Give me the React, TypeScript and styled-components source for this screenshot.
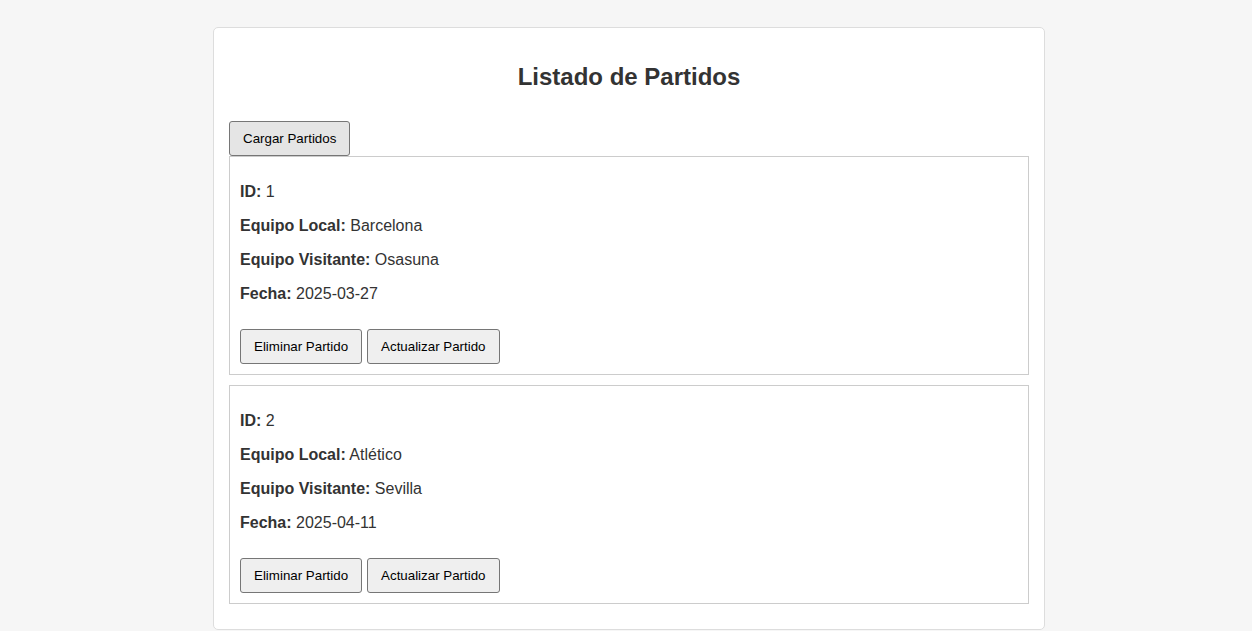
import React from 'react'
import styled, { createGlobalStyle } from 'styled-components'

const Global = createGlobalStyle`
  body {
    margin: 0;
    padding: 27px 0 0;
    background: #f6f6f6;
    font-family: 'Liberation Sans', Arial, sans-serif;
    color: #333;
  }
`

const Container = styled.div`
  box-sizing: border-box;
  width: 832px;
  margin-left: calc(50% - 413px);
  padding: 15px;
  background: #fff;
  border: 1px solid #ddd;
  border-radius: 5px;
`

const Title = styled.h2`
  margin: 20px 0;
  font-size: 24px;
  line-height: 28px;
  text-align: center;
  color: #333;
`

const Button = styled.button<{ $active?: boolean }>`
  box-sizing: border-box;
  height: 35px;
  padding: 0 13px;
  font-family: 'Liberation Sans', Arial, sans-serif;
  font-size: 13.33px;
  color: #000;
  background: ${(p) => (p.$active ? '#e5e5e5' : '#efefef')};
  border: 1px solid #767676;
  border-radius: 3px;
  cursor: pointer;
`

const LoadButton = styled(Button)`
  display: block;
  margin-top: 30px;
`

const Card = styled.div`
  padding: 10px;
  margin-bottom: 10px;
  border: 1px solid #ccc;
  background: #fff;
`

const Field = styled.p`
  margin: 16px 0;
  font-size: 16px;
  line-height: 18px;
`

const Actions = styled.div`
  display: flex;
  gap: 5px;
  margin-top: 26px;
`

const partidos = [
  { id: 1, local: 'Barcelona', visitante: 'Osasuna', fecha: '2025-03-27' },
  { id: 2, local: 'Atlético', visitante: 'Sevilla', fecha: '2025-04-11' },
]

const App = () => {
  return (
    <>
      <Global />
      <Container>
        <Title>Listado de Partidos</Title>
        <LoadButton $active>Cargar Partidos</LoadButton>
        {partidos.map((p) => (
          <Card key={p.id}>
            <Field>
              <strong>ID:</strong> {p.id}
            </Field>
            <Field>
              <strong>Equipo Local:</strong> {p.local}
            </Field>
            <Field>
              <strong>Equipo Visitante:</strong> {p.visitante}
            </Field>
            <Field>
              <strong>Fecha:</strong> {p.fecha}
            </Field>
            <Actions>
              <Button>Eliminar Partido</Button>
              <Button>Actualizar Partido</Button>
            </Actions>
          </Card>
        ))}
      </Container>
    </>
  )
}

export default App
